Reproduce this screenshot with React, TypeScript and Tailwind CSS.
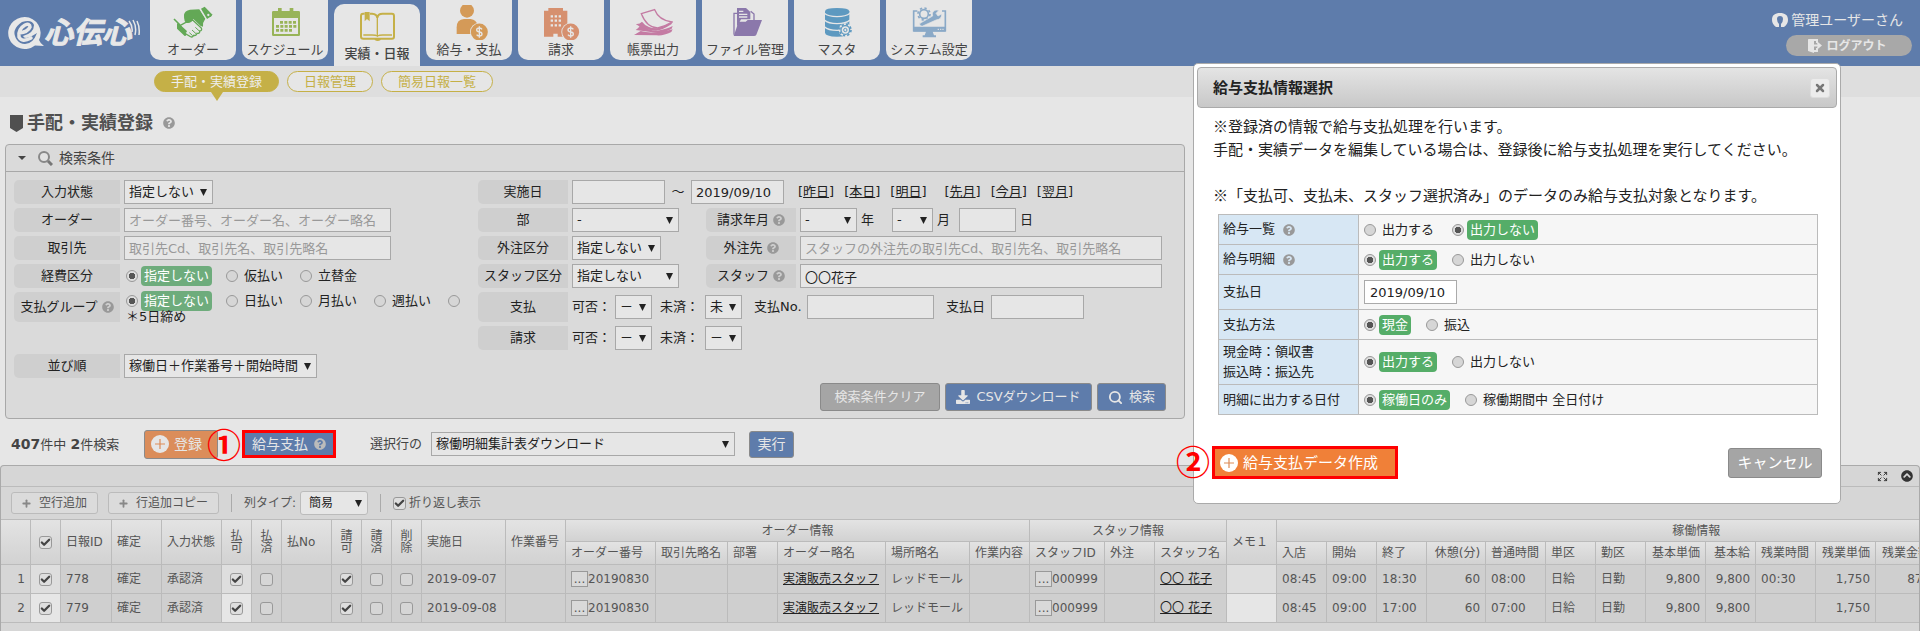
import { useId } from 'react';
import type { ReactNode } from 'react';
import { Check, Expand, Plus, Search, X } from 'lucide-react';
import { FaChevronCircleUp, FaDownload, FaQuestionCircle } from 'react-icons/fa';

const iconClass = 'block h-[35px] w-10';

function Coin({ cx, cy, color }: { cx: number; cy: number; color: string }) {
  return (
    <g transform={`translate(${cx} ${cy})`}>
      <circle r="28" fill="#e6e6e6" />
      <circle r="25.5" fill={color} />
      <path d="M8 -8 Q6 -12 0 -12 Q-8 -12 -8 -6 Q-8 -1 0 0 Q8 1 8 6 Q8 12 0 12 Q-6 12 -8 8 M0 -17 V17" fill="none" stroke="#e6e6e6" strokeWidth="4" />
    </g>
  );
}

const HandshakeIcon = () => (
  <svg className={iconClass} viewBox="519 15 120 105">
    <path d="M541 76 L556 68 L578 60 L604 84 Q607 93 599 93 Q600 101 591 100 Q589 108 581 106 Q577 115 568 108 L548 96z" fill="#e6e6e6" stroke="#63a856" strokeWidth="4" />
    <path d="M586 82 L598 93 M576 90 L588 101 M568 98 L578 107" stroke="#63a856" strokeWidth="3" />
    <path d="M522 57 L540 75" stroke="#63a856" strokeWidth="5" />
    <path d="M531 70 L538 72 L560 92 Q563 97 557 98 Q562 106 554 108 L531 86z" fill="#63a856" />
    <path d="M552 44 Q554 32 570 29 L598 28 L616 56 Q607 68 609 80 L602 78 L580 57 Q574 70 562 69 Q551 68 552 44z" fill="#63a856" />
    <path d="M603 26 L614 20 L636 43 Q637 47 634 49 L621 57z" fill="#63a856" />
    <path d="M600 27 L619 58" stroke="#e6e6e6" strokeWidth="2" />
    <circle cx="625" cy="45" r="3.5" fill="#e6e6e6" />
  </svg>
);

const CalendarIcon = () => (
  <svg className={iconClass} viewBox="795 15 120 105">
    <path d="M820 33 H896 Q900 33 900 37 V104 Q900 108 896 108 H820 Q816 108 816 104 V37 Q816 33 820 33z M822 54 V102 H894 V54z" fill="#98b458" fillRule="evenodd" />
    <path d="M834 24 h11 v12 h-11z M869 24 h11 v12 h-11z" fill="#98b458" />
    <path d="M840 67 H890 M828 79 H890 M828 91 H877" stroke="#98b458" strokeWidth="8" strokeDasharray="9 4" />
  </svg>
);

const BookIcon = () => (
  <svg className={iconClass} viewBox="1071 27 120 105">
    <g fill="none" stroke="#c5b047" strokeWidth="6">
      <path d="M1094 41 H1089 Q1083 41 1083 48 V110 Q1083 116 1090 116 H1176 Q1182 116 1182 110 V48 Q1182 41 1176 41 H1148 Q1133 41 1132 54 Q1131 42 1116 41 H1110" />
      <path d="M1132 50 V108 Q1128 105 1116 105 H1090 M1132 108 Q1138 105 1148 105 H1176" strokeWidth="4" />
    </g>
    <path d="M1094 36 H1109 V64 L1101 57 L1094 64z M1124 115 H1142 V120 Q1133 126 1124 120z" fill="#c5b047" />
  </svg>
);

const PayIcon = () => (
  <svg className={iconClass} viewBox="1347 15 120 105">
    <circle cx="1401" cy="32" r="21" fill="#d49a58" />
    <path d="M1370 102 V82 Q1370 58 1392 57 H1412 Q1430 59 1432 76 V102z" fill="#d49a58" />
    <Coin cx={1438} cy={96} color="#d49a58" />
  </svg>
);

const BillIcon = () => (
  <svg className={iconClass} viewBox="183 15 120 105">
    <path d="M192 32 H205 V24 H249 V32 H262 V110 H233 V101 H220 V110 H192z" fill="#d6906f" />
    <path d="M212 49 H243 M212 62 H243 M212 76 H243" stroke="#e6e6e6" strokeWidth="7" strokeDasharray="7 5" />
    <Coin cx={272} cy={96} color="#d6906f" />
  </svg>
);

const PapersIcon = () => (
  <svg className={iconClass} viewBox="459 15 120 105">
    <path d="M462 105 L482 93 Q515 104 578 88 L574 96 Q550 108 530 106z" fill="#c47ba3" />
    <path d="M467 90 Q476 84 484 72 Q500 92 532 92 Q560 88 578 78 L575 86 Q552 100 528 98z" fill="#c47ba3" />
    <path d="M467 72 Q478 74 486 65 Q500 84 532 85 L578 66 L574 73 Q545 92 528 92 Q490 90 467 72z" fill="#c47ba3" />
    <path d="M484 41 L524 29 Q536 60 576 66 Q556 78 533 84 Q500 82 484 41z" fill="#e6e6e6" stroke="#c47ba3" strokeWidth="4" />
  </svg>
);

const FolderIcon = () => (
  <svg className={iconClass} viewBox="735 15 120 105">
    <path d="M762 104 V40 H772 M812 34 L822 42 V60" fill="none" stroke="#8b78ab" strokeWidth="4" />
    <path d="M771 24 H798 L811 36 V58 H783 L771 80z" fill="#8b78ab" />
    <path d="M777 34 H790 M777 43 H802 M777 51 H802" stroke="#e6e6e6" strokeWidth="4" />
    <path d="M761 108 L776 65 H797 L803 60 H846 L829 104 Q827 108 822 108z" fill="#8b78ab" />
  </svg>
);

const DatabaseIcon = () => (
  <svg className={iconClass} viewBox="1011 15 120 105">
    <path d="M1035 34 Q1036 24 1071 24 Q1107 24 1108 34 V98 Q1106 110 1071 110 Q1036 109 1035 98z" fill="#5d99c0" />
    <path d="M1033 40 Q1045 50 1071 50 Q1098 50 1110 40 M1033 60 Q1045 71 1071 71 Q1098 71 1110 60 M1033 80 Q1045 91 1071 91 Q1098 91 1110 80" fill="none" stroke="#e6e6e6" strokeWidth="4" />
    <circle cx="1096" cy="90" r="20" fill="#e6e6e6" />
    <circle cx="1096" cy="90" r="13" fill="none" stroke="#5d99c0" strokeWidth="4" />
    <circle cx="1096" cy="90" r="17" fill="none" stroke="#5d99c0" strokeWidth="5" strokeDasharray="7 6.3" />
    <circle cx="1096" cy="90" r="5" fill="none" stroke="#5d99c0" strokeWidth="3" />
  </svg>
);

const SystemIcon = () => (
  <svg className={iconClass} viewBox="1287 15 120 105">
    <path d="M1312 33 H1301 V92 H1396 V33 H1386" fill="none" stroke="#8aa9c7" strokeWidth="5" />
    <path d="M1300 80 H1397 V95 H1300z M1338 95 H1358 L1362 106 H1368 V112 H1328 V106 H1334z" fill="#8aa9c7" />
    <circle cx="1332" cy="42" r="13" fill="none" stroke="#8aa9c7" strokeWidth="5" />
    <circle cx="1332" cy="42" r="18" fill="none" stroke="#8aa9c7" strokeWidth="5" strokeDasharray="7 7" />
    <path d="M1320 70 L1358 48 Q1354 34 1368 30 L1377 31 L1368 40 L1374 48 L1385 42 Q1386 58 1368 60 L1328 78 Q1316 80 1320 66z" fill="#8aa9c7" stroke="#e6e6e6" strokeWidth="2" />
    <path d="M1373 88 H1391" stroke="#e6e6e6" strokeWidth="3" strokeDasharray="4 3" />
  </svg>
);

const menuItems = [
  { label: 'オーダー', icon: HandshakeIcon },
  { label: 'スケジュール', icon: CalendarIcon },
  { label: '実績・日報', icon: BookIcon, active: true },
  { label: '給与・支払', icon: PayIcon },
  { label: '請求', icon: BillIcon },
  { label: '帳票出力', icon: PapersIcon },
  { label: 'ファイル管理', icon: FolderIcon },
  { label: 'マスタ', icon: DatabaseIcon },
  { label: 'システム設定', icon: SystemIcon },
];

function Logo() {
  return (
    <a href="#" className="flex h-[66px] w-[150px] shrink-0 items-center pl-2 text-[#e8e8e8]">
      <svg className="h-[34px] w-9 shrink-0" viewBox="0 0 36 34">
        <path d="M17 1 A16.500 16 0 1 0 27 29.500 L36 30 Q32 27 31 24 A16 16 0 0 0 17 1z" fill="#e8e8e8" />
        <path d="M9 24 Q2 14 14 6 Q24 3 26 9 Q26 17 15 20 Q17 25 29 17 Q25 28 17 28 Q12 28 9 24z" fill="#5e7cab" />
        <path d="M11 17 Q20 16 22 11 Q22 7 17 9 Q10 13 11 21 Q14 27 23 22" fill="none" stroke="#e8e8e8" strokeWidth="3.500" strokeLinecap="round" />
      </svg>
      <span className="text-[29px] leading-9 font-bold whitespace-nowrap italic [-webkit-text-stroke:1px_#e8e8e8]">心伝心</span>
      <svg className="absolute top-[18px] left-[128px] h-5 w-3" viewBox="0 0 12 20">
        <path d="M1 3 Q5 8 4 14 M5 2 Q9 9 7 17 M9 3 Q12 9 11 17" fill="none" stroke="#e8e8e8" strokeWidth="1.500" />
      </svg>
    </a>
  );
}

function Header() {
  return (
    <header className="relative flex h-[66px] bg-[#5e7cab]">
      <Logo />
      <nav className="flex gap-[6px]">
        {menuItems.map(({ label, icon: Icon, active }) => (
          <a
            key={label}
            href="#"
            className={`flex w-[86px] flex-col items-center bg-[#e6e6e6] pt-[5px] text-[#444] ${
              active ? 'mt-1 rounded-t-[10px] font-medium text-[#222]' : 'h-[60px] rounded-b-[10px]'
            }`}
          >
            <Icon />
            <span className="leading-5 whitespace-nowrap">{label}</span>
          </a>
        ))}
      </nav>
      <div className="ml-auto flex flex-col items-end gap-1 pt-[9px] pr-2">
        <div className="flex items-center gap-[3px] pr-[9px] text-sm leading-[22px] text-[#e6e6e6]">
          <svg className="h-4 w-4" viewBox="0 0 16 16">
            <path d="M4 15 H7 V12 Q5 10 5 7 Q5 4 8 4 Q11 4 11 7 Q11 10 9 12 V15 H12 Q16 12 16 8 C16 3 13 1 8 1 C3 1 0 3 0 8 Q0 12 4 15z" fill="#e6e6e6" />
          </svg>
          管理ユーザーさん
        </div>
        <button className="flex h-[21px] w-[126px] items-center justify-center gap-1 rounded-full bg-[#a8a8a8] pr-1 text-xs font-bold text-[#e6e6e6]">
          <svg className="h-[14px] w-[15px]" viewBox="0 0 15 14">
            <path d="M1 0 L7 2 V14 L1 12z" fill="#e6e6e6" />
            <path d="M2 1 H10 V4 M10 9 V12 H7 M7 6.500 H13 M10.500 4 L13.500 6.500 L10.500 9" fill="none" stroke="#e6e6e6" strokeWidth="2" />
          </svg>
          ログアウト
        </button>
      </div>
    </header>
  );
}

function SubNav() {
  const pill = 'rounded-full border border-[#c5b047] px-4 leading-[19px]';
  return (
    <nav className="flex h-[31px] items-center gap-2 bg-[#dedede] pl-[154px]">
      <a href="#" className={`${pill} relative bg-[#c5b047] text-[#eee]`}>
        手配・実績登録
        <span className="absolute top-5 left-1/2 -ml-[6px] border-x-[6px] border-t-[9px] border-x-transparent border-t-[#c5b047]" />
      </a>
      <a href="#" className={`${pill} bg-[#e6e6e6] text-[#c5b047]`}>日報管理</a>
      <a href="#" className={`${pill} bg-[#e6e6e6] text-[#c5b047]`}>簡易日報一覧</a>
    </nav>
  );
}

const Help = () => <FaQuestionCircle size={12} className="inline-block shrink-0 text-[#999]" />;

const PlusCircle = () => (
  <svg className="h-[18px] w-[18px] shrink-0" viewBox="0 0 18 18">
    <circle cx="9" cy="9" r="9" fill="currentColor" />
    <path d="M4 9 H14 M9 4 V14" stroke="#dd8b57" strokeWidth="1.200" />
  </svg>
);

function Select({ label, options, width, className }: { label: string; options: string[]; width: string; className?: string }) {
  return (
    <span className={`relative inline-block shrink-0 ${width}`}>
      <select
        aria-label={label}
        className={`block h-6 w-full appearance-none border border-[#a8a8a8] bg-[#e6e6e6] pl-1 leading-[22px] text-[#222] ${className ?? ''}`}
      >
        {options.map((option) => (
          <option key={option}>{option}</option>
        ))}
      </select>
      <svg className="pointer-events-none absolute top-[9px] right-[6px] h-[7px] w-[7px]" viewBox="0 0 7 7">
        <path d="M0 0 H7 L3.500 7z" fill="#222" />
      </svg>
    </span>
  );
}

function TextBox({ id, label, width, value, placeholder }: { id?: string; label?: string; width: string; value?: string; placeholder?: string }) {
  return (
    <input
      id={id}
      aria-label={label}
      defaultValue={value}
      placeholder={placeholder}
      className={`h-6 shrink-0 border border-[#a8a8a8] bg-[#e6e6e6] px-1 text-[#222] placeholder:text-[#999] ${width}`}
    />
  );
}

function Radio({ name, label, checked, bright, children }: { name: string; label?: string; checked?: boolean; bright?: boolean; children?: ReactNode }) {
  return (
    <label className="flex items-center gap-[3px]">
      <input
        type="radio"
        name={name}
        aria-label={label}
        defaultChecked={checked}
        className="peer h-3 w-3 shrink-0 appearance-none rounded-full border border-[#999] bg-[#d6d6d6] checked:bg-[radial-gradient(circle,#555_0_3px,#ddd_3px)]"
      />
      {children && (
        <span className={`rounded px-[3px] leading-5 whitespace-nowrap peer-checked:text-white ${bright ? 'peer-checked:bg-[#55ad68]' : 'peer-checked:bg-[#6eac7c]'}`}>
          {children}
        </span>
      )}
    </label>
  );
}

function Checkbox({ label, checked }: { label: string; checked?: boolean }) {
  return (
    <span className="relative inline-block h-[13px] w-[13px] align-middle">
      <input
        type="checkbox"
        aria-label={label}
        defaultChecked={checked}
        className="peer block h-[13px] w-[13px] appearance-none rounded-[3px] border border-[#999] bg-[#d6d6d6] checked:bg-[#dedede]"
      />
      <Check size={11} strokeWidth={5} className="pointer-events-none absolute top-px left-px hidden text-[#444] peer-checked:block" />
    </span>
  );
}

function Row({ label, help, htmlFor, tall, wide, children }: { label: string; help?: boolean; htmlFor?: string; tall?: boolean; wide?: boolean; children: ReactNode }) {
  return (
    <div className={`flex items-center gap-1 ${tall ? 'h-[30px]' : 'h-6'}`}>
      <label
        htmlFor={htmlFor}
        className={`flex h-full shrink-0 items-center justify-center gap-1 rounded-l-[5px] bg-[#cfcfcf] whitespace-nowrap ${wide ? 'w-[106px]' : 'w-[90px]'}`}
      >
        {label}
        {help && <Help />}
      </label>
      {children}
    </div>
  );
}

const DateLink = ({ children }: { children: ReactNode }) => (
  <span>
    [<a href="#" className="underline">{children}</a>]
  </span>
);

const button = 'flex items-center justify-center rounded-[3px] border border-[#8a8a8a]';

function SearchPanel() {
  const id = useId();
  const any = ['指定しない'];
  return (
    <section className="mx-[5px] mt-[9px] max-w-[1180px] rounded border border-[#a8a8a8] bg-[#dadada] text-[#222]">
      <h2 className="flex h-[27px] items-center border-b border-[#a8a8a8] pl-3 text-sm text-[#444]">
        <svg className="h-1 w-2" viewBox="0 0 8 4">
          <path d="M0 0 H8 L4 4z" fill="#444" />
        </svg>
        <svg className="mr-[6px] ml-3 h-[15px] w-[15px]" viewBox="0 0 15 15">
          <circle cx="6" cy="6" r="5" fill="#e2e2e2" stroke="#888" strokeWidth="2" />
          <path d="M10 10 L14 14" stroke="#777" strokeWidth="3" />
        </svg>
        検索条件
      </h2>
      <div className="grid grid-cols-[460px_1fr] gap-x-1 gap-y-1 px-2 pt-2">
        <Row wide label="入力状態">
          <Select label="入力状態" options={any} width="w-[89px]" />
        </Row>
        <Row label="実施日" htmlFor={`${id}-from`}>
          <TextBox id={`${id}-from`} width="w-[93px]" />
          <span className="w-[18px] text-center">～</span>
          <TextBox label="実施日 終了" width="w-[93px]" value="2019/09/10" />
          <span className="flex gap-[10px] pl-[10px]">
            <DateLink>昨日</DateLink>
            <DateLink>本日</DateLink>
            <DateLink>明日</DateLink>
          </span>
          <span className="flex gap-[10px] pl-[14px]">
            <DateLink>先月</DateLink>
            <DateLink>今月</DateLink>
            <DateLink>翌月</DateLink>
          </span>
        </Row>

        <Row wide label="オーダー" htmlFor={`${id}-order`}>
          <TextBox id={`${id}-order`} width="w-[267px]" placeholder="オーダー番号、オーダー名、オーダー略名" />
        </Row>
        <div className="flex">
          <div className="w-[228px]">
            <Row label="部">
              <Select label="部" options={['-']} width="w-[107px]" />
            </Row>
          </div>
          <Row label="請求年月" help>
            <Select label="請求年" options={['-']} width="w-[57px]" />
            <span className="w-[27px]">年</span>
            <Select label="請求月" options={['-']} width="w-[41px]" />
            <span className="w-[18px]">月</span>
            <TextBox label="請求日" width="w-[57px]" />
            日
          </Row>
        </div>

        <Row wide label="取引先" htmlFor={`${id}-client`}>
          <TextBox id={`${id}-client`} width="w-[267px]" placeholder="取引先Cd、取引先名、取引先略名" />
        </Row>
        <div className="flex">
          <div className="w-[228px]">
            <Row label="外注区分">
              <Select label="外注区分" options={any} width="w-[89px]" />
            </Row>
          </div>
          <Row label="外注先" help htmlFor={`${id}-sub`}>
            <TextBox id={`${id}-sub`} width="w-[362px]" placeholder="スタッフの外注先の取引先Cd、取引先名、取引先略名" />
          </Row>
        </div>

        <Row wide label="経費区分">
          <div className="flex gap-[14px] pl-[2px]">
            <Radio name="expense" checked>指定しない</Radio>
            <Radio name="expense">仮払い</Radio>
            <Radio name="expense">立替金</Radio>
          </div>
        </Row>
        <div className="flex">
          <div className="w-[228px]">
            <Row label="スタッフ区分">
              <Select label="スタッフ区分" options={any} width="w-[107px]" />
            </Row>
          </div>
          <Row label="スタッフ" help htmlFor={`${id}-staff`}>
            <TextBox id={`${id}-staff`} width="w-[362px]" value="〇〇花子" />
          </Row>
        </div>

        <Row wide tall label="支払グループ" help>
          <div className="pl-[2px]">
            <div className="flex gap-[14px]">
              <Radio name="group" checked>指定しない</Radio>
              <Radio name="group">日払い</Radio>
              <Radio name="group">月払い</Radio>
              <Radio name="group">週払い</Radio>
              <input
                id={`${id}-five`}
                type="radio"
                name="group"
                className="mt-1 h-3 w-3 appearance-none rounded-full border border-[#999] bg-[#d6d6d6]"
              />
            </div>
            <label htmlFor={`${id}-five`} className="block leading-3">＊5日締め</label>
          </div>
        </Row>
        <Row tall label="支払">
          <span className="w-[39px] whitespace-nowrap">可否：</span>
          <Select label="支払 可否" options={['－']} width="w-[37px]" />
          <span className="ml-1 w-[41px] whitespace-nowrap">未済：</span>
          <Select label="支払 未済" options={['未']} width="w-[37px]" />
          <label htmlFor={`${id}-payno`} className="ml-2 w-[49px] whitespace-nowrap">支払No.</label>
          <TextBox id={`${id}-payno`} width="w-[127px]" />
          <label htmlFor={`${id}-payday`} className="ml-2 w-[41px] whitespace-nowrap">支払日</label>
          <TextBox id={`${id}-payday`} width="w-[93px]" />
        </Row>

        <div />
        <Row label="請求">
          <span className="w-[39px] whitespace-nowrap">可否：</span>
          <Select label="請求 可否" options={['－']} width="w-[37px]" />
          <span className="ml-1 w-[41px] whitespace-nowrap">未済：</span>
          <Select label="請求 未済" options={['－']} width="w-[37px]" />
        </Row>

        <Row wide label="並び順">
          <Select label="並び順" options={['稼働日＋作業番号＋開始時間']} width="w-[193px]" />
        </Row>
      </div>
      <div className="mt-[5px] mb-[7px] flex justify-end gap-[5px] pr-[18px] text-[#e6e6e6]">
        <button className={`${button} h-7 w-[120px] bg-[#a5a5a5]`}>検索条件クリア</button>
        <button className={`${button} h-7 w-[147px] gap-[6px] bg-[#5e7cab]`}>
          <FaDownload size={14} />
          CSVダウンロード
        </button>
        <button className={`${button} h-7 w-[69px] gap-[6px] bg-[#5e7cab]`}>
          <Search size={15} strokeWidth={3} />
          検索
        </button>
      </div>
    </section>
  );
}

function ActionBar() {
  return (
    <div className="flex h-[46px] items-center pt-1 pl-[11px] text-[#444]">
      <p className="w-[133px] whitespace-nowrap">
        <b className="text-sm">407</b>件中 <b className="text-sm">2</b>件検索
      </p>
      <div className="relative flex">
        <button className={`${button} h-[29px] w-[74px] justify-start gap-[5px] bg-[#db8d5a] pl-[6px] text-sm text-[#e6e6e6]`}>
          <PlusCircle />
          登録
        </button>
        <Step className="-top-[2px] left-[63px]">①</Step>
      </div>
      <button className="ml-6 flex h-7 w-[94px] items-center justify-center gap-[6px] border-[3px] border-[#f00] bg-[#5e7cab] text-sm text-[#e6e6e6]">
        給与支払
        <FaQuestionCircle size={12} className="text-[#bbb]" />
      </button>
      <span className="mr-[9px] ml-[34px]">選択行の</span>
      <Select label="選択行の処理" options={['稼働明細集計表ダウンロード']} width="w-[304px]" />
      <button className={`${button} ml-[14px] h-[27px] w-[45px] bg-[#5e7cab] text-sm text-[#e6e6e6]`}>実行</button>
    </div>
  );
}

const Step = ({ className, children }: { className: string; children: ReactNode }) => (
  <span className={`absolute z-20 font-['Noto_Sans_CJK_JP',sans-serif] text-[34px] leading-8 font-bold text-[#f00] ${className}`}>
    {children}
  </span>
);

const colWidths = [
  30, 30, 51, 50, 60, 30, 30, 50, 30, 30, 30, 84, 60, 90, 72, 50, 108, 84, 60, 75, 50, 72, 50, 50, 50, 50, 59, 60, 50, 50, 60, 50,
  60, 60, 60, 180,
];

const subHeads = [
  'オーダー番号', '取引先略名', '部署', 'オーダー略名', '場所略名', '作業内容', 'スタッフID', '外注', 'スタッフ名',
  '入店', '開始', '終了', '休憩(分)', '普通時間', '単区', '勤区', '基本単価', '基本給', '残業時間', '残業単価', '残業金額', '',
];

const rightAligned = ['休憩(分)', '基本単価', '基本給', '残業単価', '残業金額'];

const rows = [
  { no: 1, id: '778', date: '2019-09-07', end: '18:30', normal: '08:00', over: '00:30', amount: '875' },
  { no: 2, id: '779', date: '2019-09-08', end: '17:00', normal: '07:00', over: '', amount: '' },
];

function Th({ children, span, tall, right, center, narrow }: { children?: ReactNode; span?: number; tall?: boolean; right?: boolean; center?: boolean; narrow?: boolean }) {
  return (
    <th
      colSpan={span}
      rowSpan={tall ? 2 : undefined}
      className={`overflow-hidden border-r border-b border-[#bbb] bg-linear-to-b from-[#e3e3e3] to-[#d2d2d2] font-normal whitespace-nowrap ${
        right ? 'pr-[5px] text-right' : center ? 'text-center' : 'pl-[5px] text-left'
      }`}
    >
      {narrow ? <span className="mx-auto block w-3 leading-3 whitespace-normal">{children}</span> : children}
    </th>
  );
}

function Td({ children, right, center, bg }: { children?: ReactNode; right?: boolean; center?: boolean; bg?: string }) {
  return (
    <td
      className={`overflow-hidden border-r border-b border-[#bbb] whitespace-nowrap ${bg ?? 'bg-[#cfcfcf]'} ${
        right ? 'pr-[5px] text-right' : center ? 'text-center' : 'pl-[5px]'
      }`}
    >
      {children}
    </td>
  );
}

const MoreButton = ({ label }: { label: string }) => (
  <button aria-label={label} className="h-4 w-[17px] border border-[#999] bg-[#d9d9d9] align-middle leading-3">...</button>
);

function Grid() {
  const toolButton = 'flex h-[22px] items-center gap-[7px] rounded-[3px] border border-[#bbb] bg-[#dbdbdb] px-[9px]';
  return (
    <section className="h-[166px] overflow-hidden rounded-t border border-b-0 border-[#aaa] bg-[#d6d6d6] text-xs text-[#555]">
      <div className="flex h-[21px] items-center justify-end gap-[13px] border-b border-[#bbb] pr-[6px] text-[#333]">
        <button aria-label="全画面">
          <Expand size={11} />
        </button>
        <button aria-label="閉じる">
          <FaChevronCircleUp size={12} />
        </button>
      </div>
      <div className="flex h-8 items-center pl-[10px]">
        <button className={`${toolButton} mr-[10px] w-[87px]`}>
          <Plus size={11} strokeWidth={4} className="text-[#888]" />
          空行追加
        </button>
        <button className={`${toolButton} w-[111px]`}>
          <Plus size={11} strokeWidth={4} className="text-[#888]" />
          行追加コピー
        </button>
        <span className="mx-3 h-[18px] w-px bg-[#aaa]" />
        <span className="mr-1">列タイプ:</span>
        <Select label="列タイプ" options={['簡易']} width="w-[68px]" className="rounded-[3px] border-[#bbb] pl-2" />
        <span className="mx-3 h-[18px] w-px bg-[#aaa]" />
        <label className="flex items-center gap-[3px]">
          <Checkbox label="折り返し表示" checked />
          折り返し表示
        </label>
      </div>
      <table className="w-[2115px] table-fixed border-separate border-spacing-0 border-t border-[#bbb]">
        <colgroup>
          {colWidths.map((width, i) => (
            <col key={i} style={{ width }} />
          ))}
        </colgroup>
        <thead>
          <tr className="h-[22px]">
            <Th tall />
            <Th tall center><Checkbox label="全選択" checked /></Th>
            <Th tall>日報ID</Th>
            <Th tall>確定</Th>
            <Th tall>入力状態</Th>
            <Th tall narrow center>払可</Th>
            <Th tall narrow center>払済</Th>
            <Th tall>払No</Th>
            <Th tall narrow center>請可</Th>
            <Th tall narrow center>請済</Th>
            <Th tall narrow center>削除</Th>
            <Th tall>実施日</Th>
            <Th tall>作業番号</Th>
            <Th span={6} center>オーダー情報</Th>
            <Th span={3} center>スタッフ情報</Th>
            <Th tall>メモ１</Th>
            <Th span={13} center>稼働情報</Th>
          </tr>
          <tr className="h-[23px]">
            {subHeads.map((head) => (
              <Th key={head} right={rightAligned.includes(head)}>{head}</Th>
            ))}
          </tr>
        </thead>
        <tbody>
          {rows.map((row) => {
            const edit = row.no === 1 ? 'bg-[#dedede]' : 'bg-[#e6e6e6]';
            return (
              <tr key={row.id} className="h-[29px]">
                <Td right bg="bg-[#d6d6d6]">{row.no}</Td>
                <Td center bg={edit}><Checkbox label={`${row.id} 選択`} checked /></Td>
                <Td>{row.id}</Td>
                <Td>確定</Td>
                <Td>承認済</Td>
                <Td center bg={edit}><Checkbox label={`${row.id} 払可`} checked /></Td>
                <Td center><Checkbox label={`${row.id} 払済`} /></Td>
                <Td />
                <Td center><Checkbox label={`${row.id} 請可`} checked /></Td>
                <Td center><Checkbox label={`${row.id} 請済`} /></Td>
                <Td center><Checkbox label={`${row.id} 削除`} /></Td>
                <Td>{row.date}</Td>
                <Td />
                <Td><MoreButton label="オーダー選択" />20190830</Td>
                <Td />
                <Td />
                <Td><a href="#" className="text-[#222] underline">実演販売スタッフ</a></Td>
                <Td>レッドモール</Td>
                <Td />
                <Td><MoreButton label="スタッフ選択" />000999</Td>
                <Td />
                <Td><a href="#" className="text-[#222] underline">〇〇 花子</a></Td>
                <Td bg={edit} />
                <Td>08:45</Td>
                <Td>09:00</Td>
                <Td>{row.end}</Td>
                <Td right>60</Td>
                <Td>{row.normal}</Td>
                <Td>日給</Td>
                <Td>日勤</Td>
                <Td right>9,800</Td>
                <Td right>9,800</Td>
                <Td>{row.over}</Td>
                <Td right>1,750</Td>
                <Td right>{row.amount}</Td>
                <Td />
              </tr>
            );
          })}
        </tbody>
      </table>
    </section>
  );
}

function DialogRow({ label, help, height, children }: { label: ReactNode; help?: boolean; height: string; children: ReactNode }) {
  return (
    <tr className={height}>
      <th className="w-[140px] border border-[#bbb] bg-[#d7e7f4] pl-1 text-left leading-5 font-normal whitespace-nowrap">
        {label}
        {help && <span className="ml-2 inline-block align-middle"><Help /></span>}
      </th>
      <td className="border border-[#bbb] bg-[#f6f6f6] pl-[5px]">
        <div className="flex items-center gap-[15px]">{children}</div>
      </td>
    </tr>
  );
}

function PaymentDialog() {
  return (
    <div
      role="dialog"
      aria-label="給与支払情報選択"
      className="absolute top-[63px] right-[79px] z-10 w-[648px] rounded-[5px] border border-[#aaa] bg-white p-[3px] pb-6 text-[#222]"
    >
      <div className="flex h-[41px] items-center justify-between rounded-[4px] border border-[#aaa] bg-linear-to-b from-[#e4e4e4] to-[#c8c8c8] pr-[6px] pl-[15px]">
        <h2 className="text-[15px] font-bold">給与支払情報選択</h2>
        <button aria-label="閉じる" className="flex h-5 w-5 items-center justify-center rounded-[3px] border border-[#ddd] bg-[#ececec] text-[#777]">
          <X size={12} strokeWidth={5} />
        </button>
      </div>
      <div className="px-4 pt-[6px] font-['Noto_Sans_CJK_JP',sans-serif] text-[15px] leading-[23px]">
        <p>※登録済の情報で給与支払処理を行います。</p>
        <p>手配・実績データを編集している場合は、登録後に給与支払処理を実行してください。</p>
        <p className="mt-[23px]">※「支払可、支払未、スタッフ選択済み」のデータのみ給与支払対象となります。</p>
      </div>
      <table className="mt-2 ml-[21px] w-[600px] border-collapse">
        <tbody>
          <DialogRow label="給与一覧" help height="h-[30px]">
            <Radio bright name="list">出力する</Radio>
            <Radio bright name="list" checked>出力しない</Radio>
          </DialogRow>
          <DialogRow label="給与明細" help height="h-[30px]">
            <Radio bright name="detail" checked>出力する</Radio>
            <Radio bright name="detail">出力しない</Radio>
          </DialogRow>
          <DialogRow label={<label htmlFor="payDate">支払日</label>} height="h-[35px]">
            <input id="payDate" defaultValue="2019/09/10" className="h-6 w-[93px] border border-[#aaa] bg-white px-[5px]" />
          </DialogRow>
          <DialogRow label="支払方法" height="h-[30px]">
            <Radio bright name="method" checked>現金</Radio>
            <Radio bright name="method">振込</Radio>
          </DialogRow>
          <DialogRow label={<>現金時：領収書<br />振込時：振込先</>} height="h-[45px]">
            <Radio bright name="receipt" checked>出力する</Radio>
            <Radio bright name="receipt">出力しない</Radio>
          </DialogRow>
          <DialogRow label="明細に出力する日付" height="h-[30px]">
            <Radio bright name="dates" checked>稼働日のみ</Radio>
            <Radio bright name="dates">稼働期間中 全日付け</Radio>
          </DialogRow>
        </tbody>
      </table>
      <div className="mt-[31px] flex items-center justify-between pr-[15px] pl-[15px] text-[15px] text-white">
        <div className="relative">
          <button className="flex h-[33px] w-[186px] items-center gap-[5px] border-[3px] border-[#f00] bg-[#f08038] pl-[5px] whitespace-nowrap">
            <PlusCircle />
            給与支払データ作成
          </button>
          <Step className="-top-px -left-9">②</Step>
        </div>
        <button className={`${button} h-[30px] w-[94px] bg-[#a5a5a5]`}>キャンセル</button>
      </div>
    </div>
  );
}

export default function App() {
  return (
    <div className="relative overflow-hidden bg-[#e6e6e6] font-['DejaVu_Sans','Noto_Sans_CJK_JP',sans-serif] text-[13px] leading-5">
      <Header />
      <SubNav />
      <main>
        <h1 className="flex h-[38px] items-center pt-[14px] pl-[10px] text-lg leading-6 font-bold text-[#505050]">
          <svg className="mr-1 h-[17px] w-[13px]" viewBox="0 0 13 17">
            <path d="M0 0 H13 V13 L6.500 17 L0 13z" fill="#505050" />
          </svg>
          手配・実績登録
          <span className="ml-[10px] flex"><Help /></span>
        </h1>
        <SearchPanel />
        <ActionBar />
        <Grid />
      </main>
      <PaymentDialog />
    </div>
  );
}
